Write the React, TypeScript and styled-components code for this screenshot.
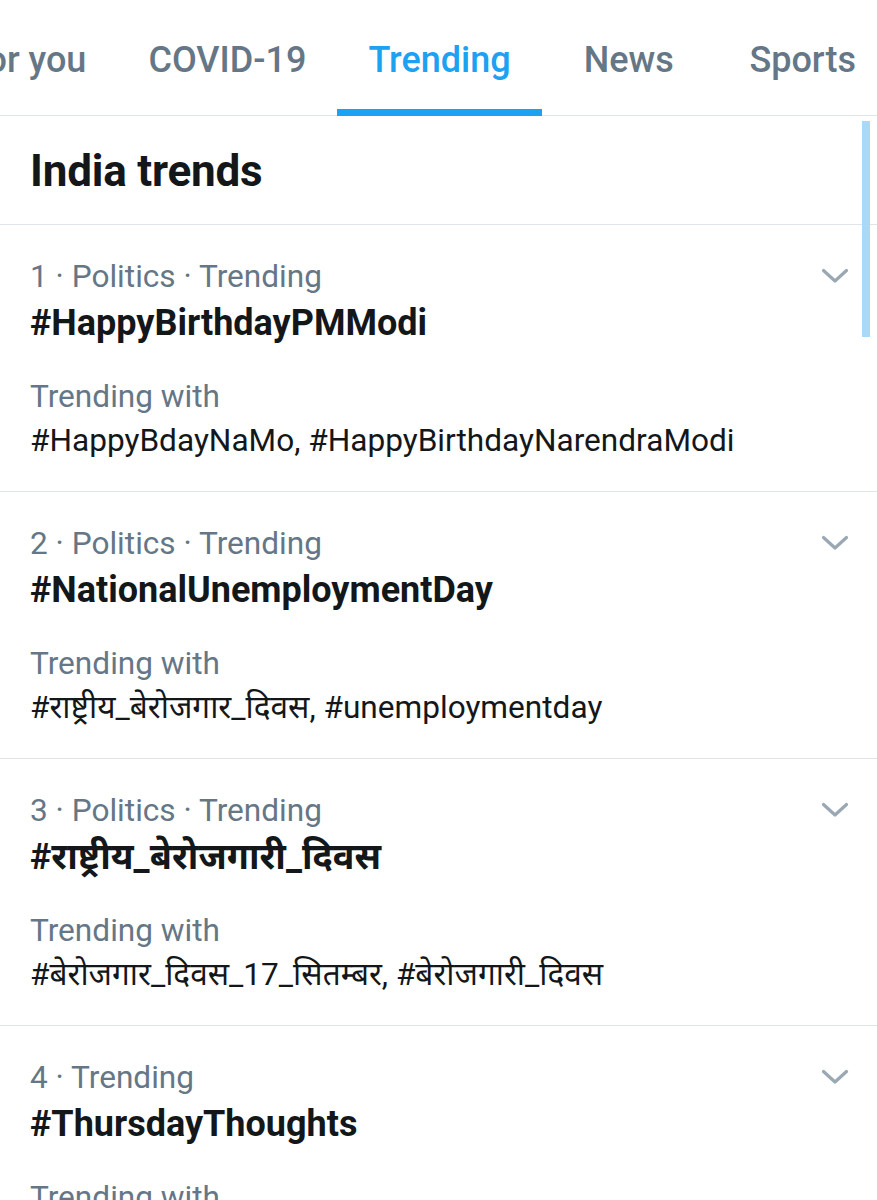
import React from "react";
import styled, { createGlobalStyle } from "styled-components";

const Global = createGlobalStyle`
  html, body { margin: 0; padding: 0; background: #fff; }
  body { font-family: Roboto, "Noto Sans", "Liberation Sans", sans-serif; overflow: hidden; }
`;

const Page = styled.div`
  position: relative;
  width: 877px;
  height: 1200px;
  overflow: hidden;
  background: #fff;
`;

const TabStrip = styled.div`
  display: flex;
  height: 116px;
  margin-left: -64px;
  border-bottom: 1px solid #dfe5e9;
  box-sizing: border-box;
`;

const Tab = styled.div<{ $active?: boolean }>`
  position: relative;
  flex: none;
  min-width: 174px;
  padding: 5px 31px 0;
  box-sizing: border-box;
  display: flex;
  align-items: center;
  justify-content: center;
  font-size: 36px;
  font-weight: 500;
  color: ${(p) => (p.$active ? "#1da1f2" : "#657786")};
  white-space: nowrap;
  ${(p) =>
    p.$active &&
    `&::after { content: ""; position: absolute; left: 0; right: 0; bottom: -1px; height: 7px; background: #1da1f2; }`}
`;

const Header = styled.div`
  height: 109px;
  display: flex;
  align-items: center;
  padding: 2px 0 0 30px;
  font-size: 44px;
  font-weight: 700;
  letter-spacing: -0.2px;
  color: #14171a;
  border-bottom: 1px solid #dfe5e9;
  box-sizing: border-box;
`;

const Row = styled.div`
  position: relative;
  height: 267px;
  box-sizing: border-box;
  padding: 32px 30px 0 30px;
  border-bottom: 1px solid #dfe5e9;
`;

const Meta = styled.div`
  font-size: 31.6px;
  line-height: 40px;
  color: #657786;
`;

const Title = styled.div`
  font-size: 36px;
  font-weight: 700;
  line-height: 53px;
  color: #14171a;
`;

const WithLabel = styled.div`
  margin-top: 27px;
  font-size: 31.6px;
  line-height: 40px;
  color: #657786;
`;

const WithTags = styled.div`
  font-size: 31.6px;
  line-height: 48px;
  color: #14171a;
`;

const Chevron = styled.svg`
  position: absolute;
  right: 28px;
  top: 43px;
  width: 28px;
  height: 16px;
`;

const ScrollThumb = styled.div`
  position: absolute;
  left: 862px;
  top: 121px;
  width: 8px;
  height: 216px;
  background: #aad8f7;
`;

const trends = [
  {
    meta: "1 · Politics · Trending",
    title: "#HappyBirthdayPMModi",
    tags: "#HappyBdayNaMo, #HappyBirthdayNarendraModi",
  },
  {
    meta: "2 · Politics · Trending",
    title: "#NationalUnemploymentDay",
    tags: "#राष्ट्रीय_बेरोजगार_दिवस, #unemploymentday",
  },
  {
    meta: "3 · Politics · Trending",
    title: "#राष्ट्रीय_बेरोजगारी_दिवस",
    tags: "#बेरोजगार_दिवस_17_सितम्बर, #बेरोजगारी_दिवस",
  },
  {
    meta: "4 · Trending",
    title: "#ThursdayThoughts",
    tags: "#ThursdayMotivation",
  },
];

const tabs = ["For you", "COVID-19", "Trending", "News", "Sports"];

export default function App() {
  return (
    <Page>
      <Global />
      <TabStrip>
        {tabs.map((t) => (
          <Tab key={t} $active={t === "Trending"}>
            {t}
          </Tab>
        ))}
      </TabStrip>
      <Header>India trends</Header>
      {trends.map((tr) => (
        <Row key={tr.meta}>
          <Meta>{tr.meta}</Meta>
          <Title>{tr.title}</Title>
          <WithLabel>Trending with</WithLabel>
          <WithTags>{tr.tags}</WithTags>
          <Chevron viewBox="0 0 28 16">
            <path d="M2.5 2.5 L14 13 L25.5 2.5" fill="none" stroke="#9aa8b4" strokeWidth="3.2" strokeLinecap="round" strokeLinejoin="round" />
          </Chevron>
        </Row>
      ))}
      <ScrollThumb />
    </Page>
  );
}
